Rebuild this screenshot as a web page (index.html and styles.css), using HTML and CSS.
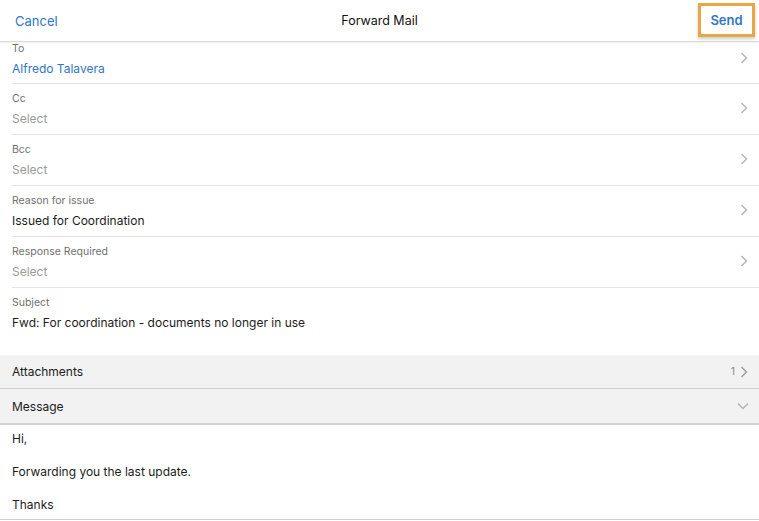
FILE: index.html
```html
<!DOCTYPE html>
<html lang="en">
<head>
    <meta charset="UTF-8">
    <meta name="viewport" content="width=device-width, initial-scale=1.0">
    <title>Forward Mail</title>
    <link rel="stylesheet" href="styles.css">
</head>
<body>
    <header class="topbar">
        <span class="link cancel">Cancel</span>
        <span class="title">Forward Mail</span>
        <span class="send-box"><span class="link send">Send</span></span>
    </header>

    <div class="fields">
        <div class="field first">
            <div class="field-text">
                <div class="label">To</div>
                <div class="value blue">Alfredo Talavera</div>
            </div>
            <svg class="chev" width="8" height="12" viewBox="0 0 8 12"><path d="M1.5 1 L6.5 6 L1.5 11" fill="none" stroke="#b3b3b3" stroke-width="1.4"/></svg>
        </div>
        <div class="field">
            <div class="field-text">
                <div class="label">Cc</div>
                <div class="value muted">Select</div>
            </div>
            <svg class="chev" width="8" height="12" viewBox="0 0 8 12"><path d="M1.5 1 L6.5 6 L1.5 11" fill="none" stroke="#b3b3b3" stroke-width="1.4"/></svg>
        </div>
        <div class="field">
            <div class="field-text">
                <div class="label">Bcc</div>
                <div class="value muted">Select</div>
            </div>
            <svg class="chev" width="8" height="12" viewBox="0 0 8 12"><path d="M1.5 1 L6.5 6 L1.5 11" fill="none" stroke="#b3b3b3" stroke-width="1.4"/></svg>
        </div>
        <div class="field">
            <div class="field-text">
                <div class="label">Reason for issue</div>
                <div class="value">Issued for Coordination</div>
            </div>
            <svg class="chev" width="8" height="12" viewBox="0 0 8 12"><path d="M1.5 1 L6.5 6 L1.5 11" fill="none" stroke="#b3b3b3" stroke-width="1.4"/></svg>
        </div>
        <div class="field">
            <div class="field-text">
                <div class="label">Response Required</div>
                <div class="value muted">Select</div>
            </div>
            <svg class="chev" width="8" height="12" viewBox="0 0 8 12"><path d="M1.5 1 L6.5 6 L1.5 11" fill="none" stroke="#b3b3b3" stroke-width="1.4"/></svg>
        </div>
        <div class="field last">
            <div class="field-text">
                <div class="label">Subject</div>
                <div class="value">Fwd: For coordination - documents no longer in use</div>
            </div>
        </div>
    </div>

    <div class="section attach">
        <span>Attachments</span>
        <span class="count">1
            <svg width="8" height="12" viewBox="0 0 8 12"><path d="M1.5 1 L6.5 6 L1.5 11" fill="none" stroke="#9a9a9a" stroke-width="1.4"/></svg>
        </span>
    </div>
    <div class="section message">
        <span>Message</span>
        <svg width="12" height="8" viewBox="0 0 12 8"><path d="M1 1.5 L6 6.5 L11 1.5" fill="none" stroke="#b3b3b3" stroke-width="1.4"/></svg>
    </div>

    <div class="body-text">
        <p>Hi,</p>
        <p>Forwarding you the last update.</p>
        <p>Thanks</p>
    </div>
</body>
</html>
```

FILE: styles.css
```css
body {
    margin: 0;
    width: 759px;
    font-family: Inter, "Liberation Sans", sans-serif;
    background-color: #ffffff;
    color: #1c1c1c;
}
.topbar {
    display: grid;
    grid-template-columns: 1fr auto 1fr;
    align-items: center;
    height: 42px;
    padding: 0 4px;
    border-bottom: 1px solid #d9d9d9;
    box-shadow: 0 1px 2px rgba(0, 0, 0, 0.06);
    box-sizing: border-box;
}
.link {
    color: #2f76c6;
    font-size: 13px;
}
.cancel {
    justify-self: start;
    margin-left: 11px;
}
.title {
    font-size: 12.5px;
    color: #111;
}
.send-box {
    justify-self: end;
    display: flex;
    align-items: center;
    justify-content: center;
    width: 51px;
    height: 28px;
    margin-top: -1px;
    border: 3px solid #e8a645;
    box-shadow: 0 2px 3px rgba(0, 0, 0, 0.2);
}
.send {
    font-weight: 600;
}
.fields {
    padding-left: 12px;
}
.field {
    display: flex;
    align-items: center;
    padding: 8px 11px 5px 0;
    border-bottom: 1px solid #e3e3e3;
}
.chev {
    margin-top: -5px;
}
.field.first {
    padding-top: 0;
    padding-bottom: 4px;
}
.field.first .chev {
    margin-top: -6px;
}
.field.last {
    border-bottom: none;
    padding-bottom: 22px;
}
.field-text {
    flex: 1;
}
.label {
    font-size: 10.5px;
    line-height: 14px;
    color: #707070;
}
.value {
    font-size: 12px;
    line-height: 20px;
    margin-top: 3px;
    color: #1c1c1c;
}
.value.blue {
    color: #2f76c6;
}
.value.muted {
    color: #9b9b9b;
}
.section {
    display: flex;
    align-items: center;
    justify-content: space-between;
    height: 33px;
    padding: 0 11px 0 12px;
    background-color: #f2f2f2;
    border-bottom: 1px solid #cfcfcf;
    font-size: 12px;
    color: #1c1c1c;
}
.section.message {
    height: 34px;
    border-bottom: 2px solid #d2d2d2;
    padding-right: 10px;
}
.count {
    display: flex;
    align-items: center;
    gap: 5px;
    font-size: 10.5px;
    color: #8a8a8a;
}
.body-text {
    padding: 4px 12px 4px;
    border-bottom: 1px solid #cfcfcf;
    font-size: 12px;
}
.body-text p {
    margin: 0 0 13px;
    line-height: 20px;
}
.body-text p:last-child {
    margin-bottom: 0;
}
```
